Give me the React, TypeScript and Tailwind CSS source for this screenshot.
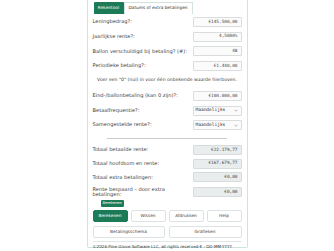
import React from "react";

const inputRows = [
  { label: "Leningbedrag?:", value: "€145.500,00" },
  { label: "Jaarlijkse rente?:", value: "4,5000%" },
  { label: "Ballon verschuldigd bij betaling? (#):", value: "48" },
  { label: "Periodieke betaling?:", value: "€1.440,00" },
];

const resultRows = [
  { label: "Totaal betaalde rente:", value: "€22.179,77" },
  { label: "Totaal hoofdsom en rente:", value: "€167.679,77" },
  { label: "Totaal extra betalingen:", value: "€0,00" },
];

const Field = ({ value, readOnly }: { value: string; readOnly?: boolean }) => (
  <div
    className={`w-[49px] h-[10px] flex items-center justify-end pr-[3px] border rounded-[1px] text-[4.4px] text-[#444] ${
      readOnly ? "bg-[#e9eded] border-[#d6dcdc]" : "bg-[#fbfbfb] border-[#d9dddd]"
    }`}
    style={{ fontFamily: '"DejaVu Sans Mono", monospace' }}
  >
    {value}
  </div>
);

const Select = ({ value }: { value: string }) => (
  <div
    className="w-[49px] h-[10px] flex items-center justify-between pl-[2px] pr-[3px] border border-[#d9dddd] rounded-[1px] bg-[#fbfbfb] text-[4.5px] text-[#333]"
    style={{ fontFamily: '"DejaVu Sans Mono", monospace' }}
  >
    <span>{value}</span>
    <svg width="4" height="3" viewBox="0 0 8 5" fill="none">
      <path d="M1 1l3 3 3-3" stroke="#777" strokeWidth="1" />
    </svg>
  </div>
);

const Row = ({ label, children }: { label: string; children: React.ReactNode }) => (
  <div className="flex items-center justify-between h-[10px]">
    <span className="text-[5.1px] text-[#444]">{label}</span>
    {children}
  </div>
);

const Btn = ({ children, primary, w }: { children: React.ReactNode; primary?: boolean; w: string }) => (
  <div
    className={`${w} h-[12px] flex items-center justify-center rounded-[2px] text-[4.3px] ${
      primary
        ? "bg-[#1c7a57] text-white border border-[#1c7a57]"
        : "bg-white text-[#444] border border-[#dde3e3]"
    }`}
  >
    {children}
  </div>
);

export default function App() {
  return (
    <div className="h-[251px] bg-white flex justify-center" style={{ fontFamily: '"DejaVu Sans", Verdana, sans-serif' }}>
      <div className="w-[161px] h-[248px] border border-[#cfe4dc] border-t-0 rounded-b-[2px] px-[5px] flex flex-col">
        <div className="flex mt-[2px] ml-[1px] h-[12px]">
          <div className="w-[30px] h-[12px] flex items-center justify-center bg-[#1c7a57] text-white text-[4.3px] rounded-t-[1px]">
            Rekentool
          </div>
          <div className="w-[69px] h-[12px] flex items-center justify-center border border-[#d3e2dd] border-b-0 text-[#333] text-[4.3px]">
            Datums of extra betalingen
          </div>
        </div>

        <div className="flex flex-col gap-[4.7px] mt-[3px]">
          {inputRows.map((r) => (
            <Row key={r.label} label={r.label}>
              <Field value={r.value} />
            </Row>
          ))}
        </div>

        <p className="text-center text-[4.6px] text-[#444] mt-[6px]">
          Voer een "0" (nul) in voor één onbekende waarde hierboven.
        </p>

        <div className="flex flex-col gap-[4.6px] mt-[7px]">
          <Row label="Eind-/ballonbetaling (kan 0 zijn)?:">
            <Field value="€100.000,00" />
          </Row>
          <Row label="Betaalfrequentie?:">
            <Select value="Maandelijks" />
          </Row>
          <Row label="Samengestelde rente?:">
            <Select value="Maandelijks" />
          </Row>
        </div>

        <div className="mx-auto w-[120px] border-t border-[#c8cccc] mt-[8px]" />

        <div className="flex flex-col gap-[3.6px] mt-[6px]">
          {resultRows.map((r) => (
            <Row key={r.label} label={r.label}>
              <Field value={r.value} readOnly />
            </Row>
          ))}
          <div className="flex items-center justify-between h-[10px] mt-[1px]">
            <span className="text-[5.1px] leading-[5px] text-[#444] w-[80px]">
              Rente bespaard – door extra betalingen:
            </span>
            <Field value="€0,00" readOnly />
          </div>
        </div>

        <div className="relative mt-[13px] flex justify-between">
          <div className="absolute left-[8px] -top-[10px] px-[2px] h-[7px] flex items-center bg-[#1c7a57] text-white text-[3.6px] rounded-[1px]">
            Berekenen
          </div>
          <Btn primary w="w-[35px]">Berekenen</Btn>
          <Btn w="w-[35px]">Wissen</Btn>
          <Btn w="w-[35px]">Afdrukken</Btn>
          <Btn w="w-[35px]">Help</Btn>
        </div>

        <div className="flex justify-between mt-[4px]">
          <Btn w="w-[72px]">Betalingsschema</Btn>
          <Btn w="w-[73px]">Grafieken</Btn>
        </div>

        <div className="border-t border-[#e3e6e6] mt-[3px] pt-[2px] text-[4.1px] text-[#333] whitespace-nowrap">
          ©2026 Pine Grove Software LLC, all rights reserved € : DD-MM-YYYY
        </div>
      </div>
    </div>
  );
}
